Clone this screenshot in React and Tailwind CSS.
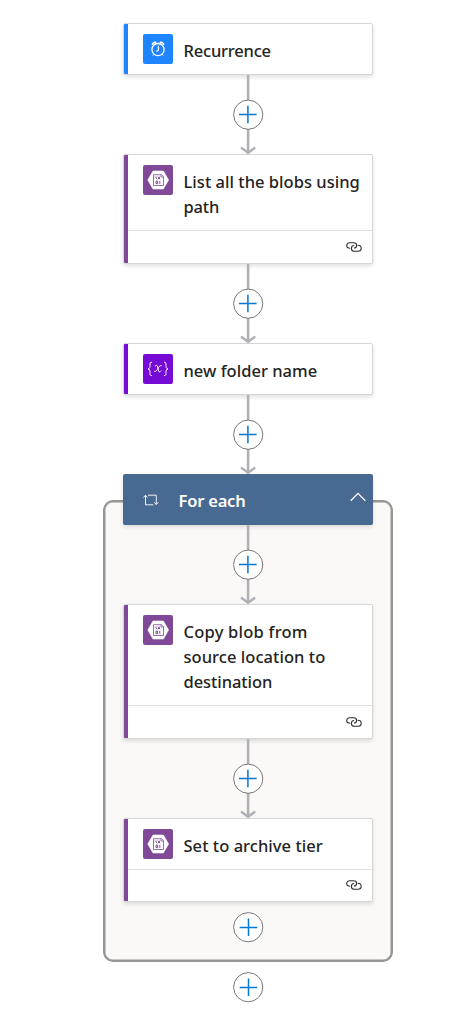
import React from 'react';

function AddButton() {
  return (
    <svg width="32" height="32" viewBox="0 0 32 32" fill="none" className="-m-px block shrink-0">
      <circle cx="16.2" cy="16.2" r="14.6" fill="#fff" stroke="#797775" strokeWidth="1" />
      <path d="M16.5 7.5v17.6M7.7 16.5h17.6" stroke="#0078d4" strokeWidth="1.5" />
    </svg>
  );
}

function Connector() {
  return (
    <svg width="32" height="79" viewBox="0 0 32 79" fill="none" className="block shrink-0">
      <path d="M16.1 0v77.5" stroke="#b1b0b5" strokeWidth="2.6" />
      <path d="M9.9 73.2 16.1 77.6l6.2-4.4" stroke="#b1b0b5" strokeWidth="2.6" strokeLinecap="round" strokeLinejoin="round" />
      <circle cx="16.2" cy="39.7" r="14.6" fill="#fff" stroke="#797775" strokeWidth="1" />
      <path d="M15.9 30.7v17.6M7 39.5h17.6" stroke="#0078d4" strokeWidth="1.5" />
    </svg>
  );
}

function ClockIcon() {
  return (
    <svg width="30" height="30" viewBox="0 0 30 30" fill="none" stroke="#fff" strokeLinecap="round" className="block shrink-0 rounded-[2px] bg-[#1f85ff]">
      <circle cx="15" cy="15.6" r="6.1" strokeWidth="1.3" />
      <path d="M15.4 12v4.2l-1.6 1" strokeWidth="1.2" />
      <path d="M9.5 10.2c.5-1.3 1.7-2 3.2-1.9M20.5 10.2c-.5-1.3-1.7-2-3.2-1.9" strokeWidth="1.7" />
      <path d="m11 20.2-.8 1M19 20.2l.8 1" strokeWidth="1" />
    </svg>
  );
}

function BlobIcon() {
  return (
    <svg width="30" height="30" viewBox="0 0 30 30" fill="none" className="block shrink-0 rounded-[2px] bg-[#804998]">
      <path d="M10 6h10.4l5.2 9-5.2 9H10l-5.2-9z" fill="#fff" stroke="#fff" strokeLinejoin="round" strokeWidth=".6" />
      <path d="M10.5 9.7h8l2 2v8.8h-10z" stroke="#804998" strokeWidth=".8" />
      <path d="M18 9.7v2.4h2.5" stroke="#804998" strokeWidth=".7" />
      <path d="M13 11.5v1.4l1.2 1.2M16.9 11.5l-2 2.8M15 11.6l2 2.6M13 16.1h1.6v2.6H13zM16.8 15.9v3" stroke="#804998" strokeWidth="1" />
    </svg>
  );
}

function VariableIcon() {
  return (
    <svg width="30" height="30" viewBox="0 0 30 30" fill="none" stroke="#fff" strokeWidth="1" strokeLinecap="round" className="block shrink-0 rounded-[2px] bg-[#770bd6]">
      <path d="M8.5 8.2C6.7 8.2 7 9.5 7 11.3c0 2.1-.1 3.2-2 3.6 1.9.4 2 1.5 2 3.6 0 1.8-.3 3.1 1.5 3.1M21.5 8.2c1.8 0 1.5 1.3 1.5 3.1 0 2.1.1 3.2 2 3.6-1.9.4-2 1.5-2 3.6 0 1.8.3 3.1-1.5 3.1" />
      <path d="M12.2 12c1.3-1.2 2-.7 2.4.8l.9 3.9c.3 1.6 1.3 1.7 2.4.2M18.4 11.6c-1.6-.5-2.6 1.4-3.5 3-.9 1.7-1.7 3.2-3.3 2.8" />
    </svg>
  );
}

function LinkIcon() {
  return (
    <svg width="16" height="10" viewBox="0 0 16 10" fill="none" stroke="#323130" strokeWidth="1.1" className="block">
      <path d="M4.2 6.3C2.2 6.3.7 5.3.7 3.6S2.2.7 3.8.7h3.8c1.8 0 3 1.1 3 2.7S9.5 6 8 6" />
      <path d="M11.6 3.3c2 0 3.6 1.1 3.6 2.9S13.7 9.2 12 9.2H8.4c-1.8 0-3-1.2-3-2.8s1.1-2.9 2.7-2.9" />
    </svg>
  );
}

const TITLE = 'text-[16.5px] leading-[25px]';

function Card({ icon, accent, height, lines, footer }) {
  return (
    <div className={`flex w-[250px] shrink-0 overflow-hidden rounded-[2px] border border-[#d6d6d6] bg-white shadow-[0_2px_4px_rgba(0,0,0,0.13)] ${height}`}>
      <div className={`-my-px -ml-px w-[5px] shrink-0 ${accent}`} />
      <div className="flex flex-1 flex-col">
        <div className="flex flex-1 items-start pl-[15px] pt-[10px]">
          {icon}
          <div className={`pl-[10.5px] pt-[4px] font-medium text-[#242322] ${TITLE}`}>
            {lines.map(([text, tracking]) => (
              <div key={text} className={`whitespace-nowrap ${tracking}`}>{text}</div>
            ))}
          </div>
        </div>
        {footer && (
          <div className={`flex shrink-0 items-center justify-end border-t border-[#e1e1e1] pr-[10px] ${footer}`}>
            <LinkIcon />
          </div>
        )}
      </div>
    </div>
  );
}

export default function App() {
  return (
    <div className="h-[1015px] w-[454px] overflow-hidden bg-white pl-[103px] pt-[23px] font-['Noto_Sans','Open_Sans',sans-serif]">
      <div className="flex w-[290px] flex-col items-center">
        <Card icon={<ClockIcon />} accent="bg-[#1f85ff]" height="h-[52px]" lines={[['Recurrence', 'tracking-[-0.2px]']]} />
        <Connector />
        <Card icon={<BlobIcon />} accent="bg-[#804998]" height="h-[110px]" footer="h-[33px] pb-px" lines={[['List all the blobs using', 'tracking-[0.03px]'], ['path', 'tracking-[-0.2px]']]} />
        <Connector />
        <Card icon={<VariableIcon />} accent="bg-[#770bd6]" height="h-[52px]" lines={[['new folder name', 'tracking-[0.02px]']]} />
        <Connector />
        <section className="mt-[26px] flex h-[462px] w-[290px] flex-col items-center rounded-[10px] border-2 border-[#979593] bg-[#faf9f8] shadow-[inset_0_0_0_0.5px_#979593]">
          <header className="-mt-[28px] flex h-[51px] w-[250px] shrink-0 items-center rounded-[2px] bg-[#486991] pl-[20px] pr-[7px] shadow-[0_2px_4px_rgba(0,0,0,0.13)]">
            <svg width="16" height="12" viewBox="0 0 16 12" fill="none" stroke="#fff" strokeWidth=".9" className="block">
              <path d="M2.5 1.5v9.3h8M5 1.2h8.3v9M.5 3.5l2-2.3 2 2.3M11.3 8.3l2 2.3 2-2.3" />
            </svg>
            <span className={`flex-1 pl-[19.5px] pt-px font-semibold tracking-[-0.2px] text-white ${TITLE}`}>For each</span>
            <svg width="16" height="10" viewBox="0 0 16 10" fill="none" stroke="#fff" strokeWidth="1.3" className="-mt-[5px] block">
              <path d="m.7 8.7 7.3-7.3 7.3 7.3" />
            </svg>
          </header>
          <Connector />
          <Card icon={<BlobIcon />} accent="bg-[#804998]" height="h-[135px]" footer="h-[33px] pb-px" lines={[['Copy blob from', 'tracking-[0.23px]'], ['source location to', 'tracking-[0.05px]'], ['destination', 'tracking-[-0.07px]']]} />
          <Connector />
          <Card icon={<BlobIcon />} accent="bg-[#804998]" height="h-[84px]" footer="h-[32px] pb-[2px]" lines={[['Set to archive tier', 'tracking-[0.04px]']]} />
          <div className="mt-[10px]">
            <AddButton />
          </div>
        </section>
        <div className="mt-[10px]">
          <AddButton />
        </div>
      </div>
    </div>
  );
}
